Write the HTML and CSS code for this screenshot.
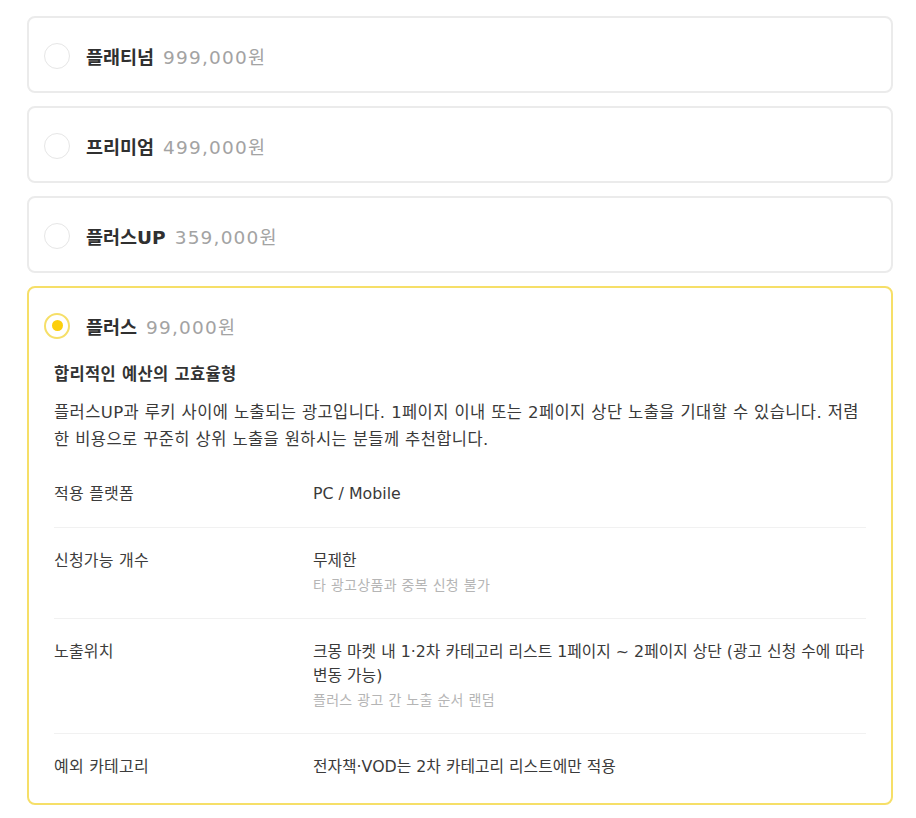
FILE: index.html
```html
<!DOCTYPE html>
<html lang="ko">
<head>
<meta charset="utf-8">
<link rel="stylesheet" href="styles.css">
</head>
<body>
<div class="list">
  <div class="card">
    <div class="head"><span class="radio"></span><span class="name">플래티넘</span><span class="price">999,000원</span></div>
  </div>
  <div class="card">
    <div class="head"><span class="radio"></span><span class="name">프리미엄</span><span class="price">499,000원</span></div>
  </div>
  <div class="card">
    <div class="head"><span class="radio"></span><span class="name">플러스UP</span><span class="price">359,000원</span></div>
  </div>
  <div class="card selected">
    <div class="head"><span class="radio on"></span><span class="name">플러스</span><span class="price">99,000원</span></div>
    <div class="body">
      <h3 class="sub">합리적인 예산의 고효율형</h3>
      <p class="desc">플러스UP과 루키 사이에 노출되는 광고입니다. 1페이지 이내 또는 2페이지 상단 노출을 기대할 수 있습니다. 저렴한 비용으로 꾸준히 상위 노출을 원하시는 분들께 추천합니다.</p>
      <div class="table">
        <div class="row"><div class="label">적용 플랫폼</div><div class="value">PC / Mobile</div></div>
        <div class="row"><div class="label">신청가능 개수</div><div class="value">무제한<div class="note">타 광고상품과 중복 신청 불가</div></div></div>
        <div class="row"><div class="label">노출위치</div><div class="value">크몽 마켓 내 1·2차 카테고리 리스트 1페이지 ~ 2페이지 상단 (광고 신청 수에 따라 변동 가능)<div class="note">플러스 광고 간 노출 순서 랜덤</div></div></div>
        <div class="row"><div class="label">예외 카테고리</div><div class="value">전자책·VOD는 2차 카테고리 리스트에만 적용</div></div>
      </div>
    </div>
  </div>
  <div class="card empty"></div>
</div>
</body>
</html>
```
FILE: styles.css
```css
html, body { margin: 0; padding: 0; background: #fff; }
body { font-family: "DejaVu Sans", "Noto Sans CJK KR", sans-serif; color: #333; }
.list { padding: 16px 23px 0 27px; display: flex; flex-direction: column; gap: 13px; }
.card { border: 2px solid #ebebeb; border-radius: 8px; background: #fff; }
.card.selected { border-color: #f6df68; }
.card.empty { height: 73px; }
.head { display: flex; align-items: center; height: 73px; padding: 2px 15px 0; box-sizing: border-box; }
.radio { width: 26px; height: 26px; box-sizing: border-box; border: 1.5px solid #e6e6e6; border-radius: 50%; margin-right: 16px; flex: none; display: flex; align-items: center; justify-content: center; }
.radio.on { border: 2px solid #f6df68; }
.radio.on::after { content: ""; width: 11px; height: 11px; border-radius: 50%; background: #fccf0c; }
.name { font-size: 18.5px; font-weight: 700; color: #303030; margin-right: 9px; }
.price { font-size: 18.5px; color: #a3a3a3; letter-spacing: 1.2px; }
.body { padding: 0 23px 3px 25px; }
.sub { margin: 0; font-size: 16.5px; font-weight: 700; line-height: 24px; color: #333; padding-top: 2px; letter-spacing: 0.3px; }
.desc { margin: 12px 0 8px; font-size: 16.5px; line-height: 27px; color: #3a3a3a; letter-spacing: 0.4px; }
.row { display: flex; padding: 21px 0; margin-right: 2px; border-top: 1px solid #f1f1f1; font-size: 16px; line-height: 24px; letter-spacing: 0.2px; }
.row:first-child { border-top: none; }
.label { width: 259px; flex: none; color: #3c3c3c; }
.value { flex: 1; color: #3a3a3a; margin-right: -2px; font-size: 15.8px; letter-spacing: 0; }
.note { font-size: 14px; color: #b5b5b5; line-height: 24px; letter-spacing: 0.3px; }
```
